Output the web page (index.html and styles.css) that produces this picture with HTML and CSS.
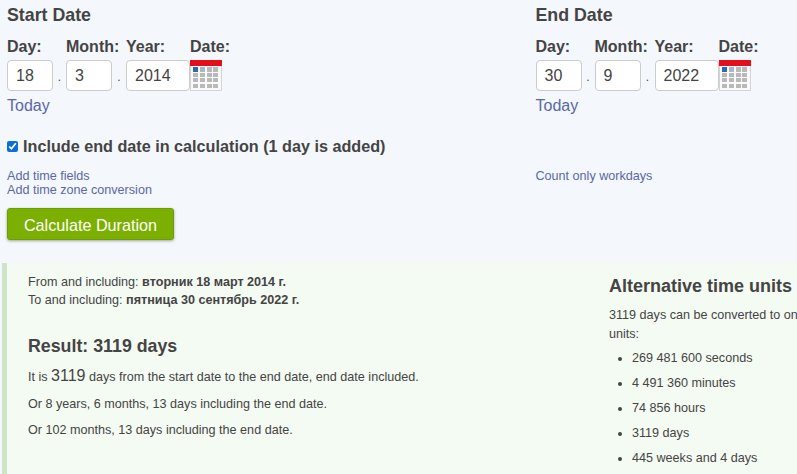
FILE: index.html
```html
<!DOCTYPE html>
<html lang="en">
<head>
    <meta charset="UTF-8">
    <meta name="viewport" content="width=device-width, initial-scale=1.0">
    <title>Date Duration Calculator</title>
    <link rel="stylesheet" href="styles.css">
</head>
<body>

    <form class="date-form">
        <div class="date-columns">
            <section class="date-col">
                <h2>Start Date</h2>
                <div class="date-fields">
                    <label class="lbl-day">Day:</label>
                    <label class="lbl-month">Month:</label>
                    <label class="lbl-year">Year:</label>
                    <label class="lbl-date">Date:</label>
                    <input class="field" type="text" value="18">
                    <span class="dot">.</span>
                    <input class="field" type="text" value="3">
                    <span class="dot">.</span>
                    <input class="field" type="text" value="2014">
                    <svg class="cal-icon" width="32" height="31" viewBox="0 0 32 31">
                        <rect x="0.5" y="0.5" width="31" height="30" fill="#fafafa" stroke="#d4d4d8"/>
                        <rect x="0" y="0" width="32" height="6" fill="#e3101c"/>
                        <rect x="3" y="7" width="5" height="5" fill="#2a6cab"/>
                        <rect x="10" y="7" width="5" height="5" fill="#a9b8c6"/>
                        <rect x="17" y="7" width="5" height="5" fill="#b9b9b9"/>
                        <rect x="23" y="7" width="5" height="5" fill="#b9b9b9"/>
                        <rect x="3" y="13" width="5" height="4" fill="#b9b9b9"/>
                        <rect x="10" y="13" width="5" height="4" fill="#b9b9b9"/>
                        <rect x="17" y="13" width="5" height="4" fill="#b9b9b9"/>
                        <rect x="23" y="13" width="5" height="4" fill="#b9b9b9"/>
                        <rect x="3" y="18" width="5" height="4" fill="#b9b9b9"/>
                        <rect x="10" y="18" width="5" height="4" fill="#b9b9b9"/>
                        <rect x="17" y="18" width="5" height="4" fill="#b9b9b9"/>
                        <rect x="23" y="18" width="5" height="4" fill="#b9b9b9"/>
                        <rect x="3" y="24" width="5" height="4" fill="#b9b9b9"/>
                        <rect x="10" y="24" width="5" height="4" fill="#b9b9b9"/>
                        <rect x="17" y="24" width="5" height="4" fill="#b9b9b9"/>
                        <rect x="23" y="24" width="5" height="4" fill="#b9b9b9"/>
                    </svg>
                </div>
                <a class="today" href="#">Today</a>
            </section>
            <section class="date-col">
                <h2>End Date</h2>
                <div class="date-fields">
                    <label class="lbl-day">Day:</label>
                    <label class="lbl-month">Month:</label>
                    <label class="lbl-year">Year:</label>
                    <label class="lbl-date">Date:</label>
                    <input class="field" type="text" value="30">
                    <span class="dot">.</span>
                    <input class="field" type="text" value="9">
                    <span class="dot">.</span>
                    <input class="field" type="text" value="2022">
                    <svg class="cal-icon" width="32" height="31" viewBox="0 0 32 31">
                        <rect x="0.5" y="0.5" width="31" height="30" fill="#fafafa" stroke="#d4d4d8"/>
                        <rect x="0" y="0" width="32" height="6" fill="#e3101c"/>
                        <rect x="3" y="7" width="5" height="5" fill="#2a6cab"/>
                        <rect x="10" y="7" width="5" height="5" fill="#a9b8c6"/>
                        <rect x="17" y="7" width="5" height="5" fill="#b9b9b9"/>
                        <rect x="23" y="7" width="5" height="5" fill="#b9b9b9"/>
                        <rect x="3" y="13" width="5" height="4" fill="#b9b9b9"/>
                        <rect x="10" y="13" width="5" height="4" fill="#b9b9b9"/>
                        <rect x="17" y="13" width="5" height="4" fill="#b9b9b9"/>
                        <rect x="23" y="13" width="5" height="4" fill="#b9b9b9"/>
                        <rect x="3" y="18" width="5" height="4" fill="#b9b9b9"/>
                        <rect x="10" y="18" width="5" height="4" fill="#b9b9b9"/>
                        <rect x="17" y="18" width="5" height="4" fill="#b9b9b9"/>
                        <rect x="23" y="18" width="5" height="4" fill="#b9b9b9"/>
                        <rect x="3" y="24" width="5" height="4" fill="#b9b9b9"/>
                        <rect x="10" y="24" width="5" height="4" fill="#b9b9b9"/>
                        <rect x="17" y="24" width="5" height="4" fill="#b9b9b9"/>
                        <rect x="23" y="24" width="5" height="4" fill="#b9b9b9"/>
                    </svg>
                </div>
                <a class="today" href="#">Today</a>
            </section>
        </div>

        <label class="include-row">
            <input class="include-check" type="checkbox" checked>
            Include end date in calculation (1 day is added)
        </label>

        <div class="date-columns option-links">
            <div>
                <a href="#">Add time fields</a>
                <a href="#">Add time zone conversion</a>
            </div>
            <div>
                <a href="#">Count only workdays</a>
            </div>
        </div>

        <button class="calc-btn" type="button">Calculate Duration</button>
    </form>

    <section class="result-box">
        <div class="result-main">
            <p class="range">From and including: <b>вторник 18 март 2014 г.</b><br>To and including: <b>пятница 30 сентябрь 2022 г.</b></p>
            <h2>Result: 3119 days</h2>
            <p>It is <span class="big-num">3119</span> days from the start date to the end date, end date included.</p>
            <p>Or 8 years, 6 months, 13 days including the end date.</p>
            <p>Or 102 months, 13 days including the end date.</p>
        </div>
        <div class="result-alt">
            <h3>Alternative time units</h3>
            <p>3119 days can be converted to one of these units:</p>
            <ul>
                <li>269 481 600 seconds</li>
                <li>4 491 360 minutes</li>
                <li>74 856 hours</li>
                <li>3119 days</li>
                <li>445 weeks and 4 days</li>
            </ul>
        </div>
    </section>

</body>
</html>
```

FILE: styles.css
```css
html, body {
    height: 474px;
    overflow: hidden;
}

body {
    font-family: "Liberation Sans", Arial, sans-serif;
    background-color: #f4f7fb;
    color: #444;
    margin: 0;
    padding: 0;
    font-size: 12.6px;
}

a {
    color: #5a68a8;
    text-decoration: none;
}

.date-form {
    padding: 0 0 0 7px;
    height: 263px;
    box-sizing: border-box;
}

.date-columns {
    display: grid;
    grid-template-columns: 528.5px 1fr;
}

.date-col h2 {
    margin: 0;
    padding-top: 5px;
    font-size: 17.8px;
    line-height: 20px;
}

.date-fields {
    display: grid;
    grid-template-columns: 46px 13px 46px 14px 64px 32px;
    grid-template-rows: 22px 31px;
    margin-top: 13px;
    width: 201px;
}

.date-fields label {
    font-size: 16px;
    font-weight: bold;
    line-height: 18px;
    white-space: nowrap;
}

.lbl-day { grid-column: 1; }
.lbl-month { grid-column: 3; }
.lbl-year { grid-column: 5; }
.lbl-date { grid-column: 6; }

.field {
    box-sizing: border-box;
    width: 100%;
    height: 31px;
    margin: 0;
    padding: 0 8px;
    border: 1px solid #ccc;
    border-radius: 4px;
    background-color: #fff;
    color: #444;
    font-family: inherit;
    font-size: 16px;
}

.dot {
    text-align: center;
    font-size: 12px;
    line-height: 34px;
}

.today {
    display: block;
    margin-top: 5px;
    font-size: 16px;
    line-height: 19px;
}

.include-row {
    display: flex;
    align-items: center;
    margin-top: 21px;
    font-size: 16.2px;
    font-weight: bold;
    line-height: 20px;
}

.include-check {
    width: 11px;
    height: 11px;
    margin: 0 5px 0 0;
    accent-color: #0b6fd6;
}

.option-links {
    margin-top: 13px;
    line-height: 14px;
}

.option-links a {
    display: block;
}

.calc-btn {
    display: block;
    margin-top: 11px;
    width: 167px;
    height: 32px;
    padding: 2px 0 0;
    background-color: #7cb000;
    color: #fff;
    border: 1px solid #6f9e00;
    border-radius: 3px;
    box-shadow: 0 1px 3px rgba(0, 0, 0, 0.35);
    font-family: inherit;
    font-size: 16.2px;
    cursor: pointer;
}

.result-box {
    display: flex;
    height: 211px;
    margin-left: 2px;
    border-left: 5px solid #cfe3c8;
    background-color: #f4fbf2;
}

.result-main {
    width: 602px;
    flex-shrink: 0;
    padding-left: 21px;
    box-sizing: border-box;
}

.result-main p {
    margin: 0 0 9.7px;
    line-height: 17px;
}

.result-main .range {
    margin: 10px 0 0;
    line-height: 18px;
}

.result-main h2 {
    margin: 27px 0 11px;
    font-size: 17.8px;
    line-height: 20px;
}

.big-num {
    font-size: 16px;
}

.result-alt {
    width: 262px;
    flex-shrink: 0;
}

.result-alt h3 {
    margin: 13px 0 0;
    font-size: 18px;
    line-height: 20px;
}

.result-alt p {
    margin: 10px 0 0;
    line-height: 19px;
}

.result-alt ul {
    margin: 6px 0 0;
    padding-left: 23px;
}

.result-alt li {
    line-height: 17px;
    margin-bottom: 8px;
}
```
